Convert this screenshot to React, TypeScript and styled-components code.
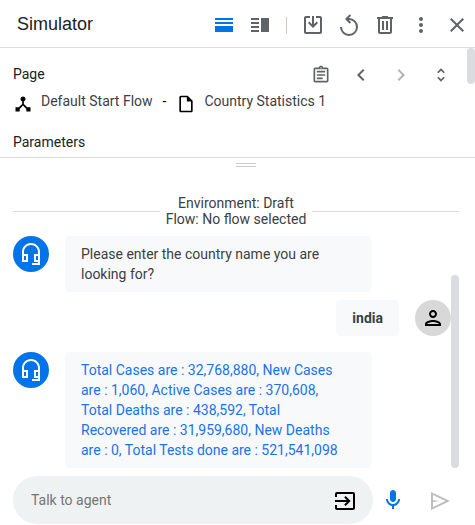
import React from 'react';
import styled, { createGlobalStyle } from 'styled-components';

const GlobalStyle = createGlobalStyle`
  * { box-sizing: border-box; }
  html, body { margin: 0; background: #fff; }
  body, button, input { font-family: Roboto, "Open Sans", sans-serif; font-size: 14px; }
  p, h1, h2 { margin: 0; font-weight: 400; }
`;

const Panel = styled.main`
  display: flex;
  flex-direction: column;
  min-height: 100vh;
  color: #3c4043;
`;

const Header = styled.header`
  display: flex;
  align-items: center;
  justify-content: space-between;
  height: 48px;
  padding: 3px 6px 0 17px;
  border-bottom: 1px solid #dadce0;
`;

const Title = styled.h1`
  padding-bottom: 3px;
  font: 400 18px/24px "Liberation Sans", Arial, sans-serif;
  color: #202124;
`;

const Toolbar = styled.div`
  display: flex;
  align-items: center;
  gap: 12px;
`;

const Separator = styled.span`
  width: 1px;
  height: 17px;
  margin: 0 2px;
  background: #d0c8c2;
`;

const IconButton = styled.button<{ $tone?: string }>`
  display: flex;
  flex: none;
  align-items: center;
  justify-content: center;
  width: 24px;
  height: 24px;
  padding: 0;
  border: 0;
  background: none;
  color: ${({ $tone }) => $tone ?? '#5f6368'};
  cursor: pointer;
  &:disabled { cursor: default; }
`;

const Svg = styled.svg`
  display: block;
  flex: none;
  fill: currentColor;
`;

const Details = styled.section`
  position: relative;
  display: flex;
  flex-direction: column;
  padding: 13px 22px 3px 13px;
  border-bottom: 1px solid #dadce0;
`;

const DetailsTop = styled.div`
  display: flex;
  align-items: center;
  justify-content: space-between;
`;

const SectionTitle = styled.h2`
  font-size: 14px;
  line-height: 24px;
  color: #202124;
`;

const PageActions = styled.div`
  display: flex;
  align-items: center;
  gap: 16px;
  padding-top: 2px;
`;

const Breadcrumb = styled.div`
  display: flex;
  align-items: flex-start;
  gap: 10px;
  height: 28px;
  margin: 4px 0 11px;
  line-height: 20px;
  color: #000;
`;

const Crumb = styled.span`
  display: flex;
  gap: 8px;
  color: #3c4043;
  svg { margin-top: 3px; color: #000; }
`;

const Thumb = styled.span<{ $top: number; $right: number; $height: number }>`
  position: absolute;
  top: ${({ $top }) => $top}px;
  right: ${({ $right }) => $right}px;
  width: 8px;
  height: ${({ $height }) => $height}px;
  border-radius: 4px;
  background: #dadce0;
`;

const Handle = styled.div`
  align-self: center;
  width: 20px;
  height: 4px;
  margin: 5px 0 28px 16px;
  border: solid #c8cacc;
  border-width: 1px 0;
`;

const Chat = styled.section`
  position: relative;
  display: flex;
  flex: 1;
  flex-direction: column;
  gap: 8px;
  padding: 0 16px 8px 13px;
`;

const Environment = styled.div`
  display: flex;
  align-items: center;
  gap: 6px;
  padding-bottom: 1px;
  line-height: 16px;
  text-align: center;
  &::before, &::after {
    content: "";
    flex: 1;
    height: 1px;
    background: #dadce0;
  }
`;

const Message = styled.div<{ $user?: boolean }>`
  display: flex;
  flex-direction: ${({ $user }) => ($user ? 'row-reverse' : 'row')};
  align-items: flex-start;
  gap: 16px;
  padding-right: ${({ $user }) => ($user ? 8 : 87)}px;
  padding-bottom: ${({ $user }) => ($user ? 8 : 0)}px;
`;

const Avatar = styled.span<{ $user?: boolean }>`
  display: grid;
  flex: none;
  place-items: center;
  width: 36px;
  height: 36px;
  border-radius: 50%;
  background: ${({ $user }) => ($user ? '#d8d8d8' : '#0074e8')};
  color: ${({ $user }) => ($user ? '#000' : '#fff')};
`;

const Bubble = styled.p<{ $kind?: 'user' | 'answer' }>`
  flex: ${({ $kind }) => ($kind === 'user' ? 'none' : '1')};
  padding: 8px 16px;
  border-radius: 4px;
  background: #f8f9fb;
  line-height: 20px;
  font-weight: ${({ $kind }) => ($kind === 'user' ? 700 : 400)};
  color: ${({ $kind }) => ($kind === 'answer' ? '#1a73e8' : '#3c4043')};
`;

const Composer = styled.form`
  display: flex;
  align-items: center;
  padding: 0 22px 1px 13px;
`;

const Field = styled.div`
  display: flex;
  flex: 1;
  align-items: center;
  min-width: 0;
  height: 48px;
  padding: 0 16px 0 18px;
  border-radius: 24px;
  background: #eef2f3;
`;

const TextInput = styled.input`
  flex: 1;
  min-width: 0;
  padding: 0;
  border: 0;
  outline: 0;
  background: none;
  line-height: 20px;
  color: #3c4043;
  &::placeholder { color: #757575; opacity: 1; }
`;

const ComposerActions = styled.div`
  display: flex;
  gap: 24px;
  padding-left: 8px;
`;

const icons = {
  stacked: 'M3 5h18v2H3zM3 9h18v2H3zM3 13h18v6H3z',
  split: 'M3 5h8v2H3zM3 9h8v2H3zM3 13h8v2H3zM3 17h8v2H3zM13 5h8v14h-8z',
  save: 'M9 3v2H5v14h14V5h-4V3h4c1.100 0 2 .9 2 2v14c0 1.100-.9 2-2 2H5c-1.100 0-2-.9-2-2V5c0-1.100.9-2 2-2zM11 3h2v8.200l2.600-2.600L17 10l-5 5-5-5 1.400-1.400 2.600 2.600z',
  restart: 'M12.700 1.300 8 6l4.700 4.700 1.400-1.400L11.800 7H12a7 7 0 1 1-7 7H3a9 9 0 1 0 9-9h-.2l2.300-2.300z',
  trash: 'M15 4V3H9v1H4v2h1v13c0 1.100.9 2 2 2h10c1.100 0 2-.9 2-2V6h1V4zm2 15H7V6h10zM9 8h2v9H9zm4 0h2v9h-2z',
  more: 'M12 8c1.100 0 2-.9 2-2s-.9-2-2-2-2 .9-2 2 .9 2 2 2zm0 2c-1.100 0-2 .9-2 2s.9 2 2 2 2-.9 2-2-.9-2-2-2zm0 6c-1.100 0-2 .9-2 2s.9 2 2 2 2-.9 2-2-.9-2-2-2z',
  close: 'M19 6.410 17.590 5 12 10.590 6.410 5 5 6.410 10.590 12 5 17.590 6.410 19 12 13.410 17.590 19 19 17.590 13.410 12z',
  clipboard: 'M7 15h7v2H7zm0-4h10v2H7zm0-4h10v2H7zm12-4h-4.180C14.400 1.840 13.300 1 12 1s-2.400.84-2.820 2H5c-1.100 0-2 .9-2 2v14c0 1.100.9 2 2 2h14c1.100 0 2-.9 2-2V5c0-1.100-.9-2-2-2zm-7-.25c.41 0 .75.34.75.75s-.34.75-.75.75-.75-.34-.75-.75.34-.75.75-.75zM19 19H5V5h14z',
  left: 'M15.410 7.410 14 6l-6 6 6 6 1.410-1.410L10.830 12z',
  right: 'M8.590 16.590 10 18l6-6-6-6-1.410 1.410L13.170 12z',
  unfold: 'M12 6.830 15.170 10l1.410-1.410L12 4 7.410 8.590 8.830 10zM12 17.170 8.830 14l-1.410 1.410L12 20l4.590-4.590L15.170 14z',
  hub: 'm17 16-4-4V8.820C14.160 8.400 15 7.300 15 6c0-1.660-1.340-3-3-3S9 4.340 9 6c0 1.300.84 2.400 2 2.820V12l-4 4H3v5h5v-3.050l4-4.200 4 4.200V21h5v-5z',
  page: 'M14 2H6c-1.100 0-2 .9-2 2v16c0 1.100.9 2 2 2h12c1.100 0 2-.9 2-2V8zm4 18H6V4h7v5h5z',
  headset: 'M12 1c-4.970 0-9 4.030-9 9v10h6v-8H5v-2c0-3.870 3.130-7 7-7s7 3.130 7 7v2h-4v8h4v1h-6v2h8V10c0-4.970-4.030-9-9-9zM7 14v4H5v-4zm12 4h-2v-4h2z',
  person: 'M12 6c1.100 0 2 .9 2 2s-.9 2-2 2-2-.9-2-2 .9-2 2-2m0 10c2.700 0 5.800 1.290 6 2H6c.23-.72 3.310-2 6-2m0-12C9.790 4 8 5.790 8 8s1.790 4 4 4 4-1.790 4-4-1.790-4-4-4zm0 10c-2.670 0-8 1.340-8 4v2h16v-2c0-2.660-5.330-4-8-4z',
  enter: 'M20 4H4c-1.100 0-2 .9-2 2v3h2V6h16v14H4v-3H2v3c0 1.100.9 2 2 2h16c1.100 0 2-.9 2-2V6c0-1.100-.9-2-2-2zM12.600 8l-1.400 1.400 2.600 2.600H2v2h11.800l-2.600 2.600 1.400 1.400 5-5z',
  mic: 'M12 14c1.660 0 3-1.340 3-3V5c0-1.660-1.340-3-3-3S9 3.340 9 5v6c0 1.660 1.340 3 3 3zm5-3c0 2.760-2.240 5-5 5s-5-2.240-5-5H5c0 3.530 2.610 6.430 6 6.920V21h2v-3.080c3.390-.49 6-3.390 6-6.920z',
  send: 'M2 4v18l19-9zm2 3.100L16.500 13 4 18.900V14l6-1-6-1z',
};

const Icon = ({ name, size = 24 }: { name: keyof typeof icons; size?: number }) => (
  <Svg width={size} height={size} viewBox="0 0 24 24" aria-hidden="true">
    <path d={icons[name]} fillRule="evenodd" />
  </Svg>
);

export default function App() {
  return (
    <>
      <GlobalStyle />
      <Panel>
        <Header>
          <Title>Simulator</Title>
          <Toolbar>
            <IconButton $tone="#0074e8" aria-label="Stacked view"><Icon name="stacked" /></IconButton>
            <IconButton aria-label="Split view"><Icon name="split" /></IconButton>
            <Separator />
            <IconButton aria-label="Save"><Icon name="save" /></IconButton>
            <IconButton aria-label="Restart"><Icon name="restart" /></IconButton>
            <IconButton aria-label="Delete"><Icon name="trash" /></IconButton>
            <IconButton aria-label="More options"><Icon name="more" /></IconButton>
            <IconButton aria-label="Close"><Icon name="close" /></IconButton>
          </Toolbar>
        </Header>
        <Details>
          <Thumb $top={0} $right={0} $height={36} />
          <DetailsTop>
            <SectionTitle>Page</SectionTitle>
            <PageActions>
              <IconButton aria-label="Copy details"><Icon name="clipboard" size={20} /></IconButton>
              <IconButton aria-label="Previous"><Icon name="left" /></IconButton>
              <IconButton $tone="#b4b5b7" aria-label="Next" disabled><Icon name="right" /></IconButton>
              <IconButton aria-label="Expand"><Icon name="unfold" size={20} /></IconButton>
            </PageActions>
          </DetailsTop>
          <Breadcrumb>
            <Crumb><Icon name="hub" size={20} />Default Start Flow</Crumb>
            -
            <Crumb><Icon name="page" size={20} />Country Statistics 1</Crumb>
          </Breadcrumb>
          <SectionTitle>Parameters</SectionTitle>
        </Details>
        <Handle />
        <Chat>
          <Environment>
            <p>Environment: Draft<br />Flow: No flow selected</p>
          </Environment>
          <Message>
            <Avatar><Icon name="headset" /></Avatar>
            <Bubble>Please enter the country name you are<br />looking for?</Bubble>
          </Message>
          <Message $user>
            <Avatar $user><Icon name="person" /></Avatar>
            <Bubble $kind="user">india</Bubble>
          </Message>
          <Message>
            <Avatar><Icon name="headset" /></Avatar>
            <Bubble $kind="answer">
              Total Cases are : 32,768,880, New Cases<br />
              are : 1,060, Active Cases are : 370,608,<br />
              Total Deaths are : 438,592, Total<br />
              Recovered are : 31,959,680, New Deaths<br />
              are : 0, Total Tests done are : 521,541,098
            </Bubble>
          </Message>
          <Thumb $top={80} $right={16} $height={193} />
        </Chat>
        <Composer onSubmit={(event) => event.preventDefault()}>
          <Field>
            <TextInput aria-label="Talk to agent" placeholder="Talk to agent" />
            <IconButton type="button" $tone="#000" aria-label="Send event"><Icon name="enter" /></IconButton>
          </Field>
          <ComposerActions>
            <IconButton type="button" $tone="#0074e8" aria-label="Speak"><Icon name="mic" /></IconButton>
            <IconButton $tone="#bdbdbd" aria-label="Send" disabled><Icon name="send" /></IconButton>
          </ComposerActions>
        </Composer>
      </Panel>
    </>
  );
}
